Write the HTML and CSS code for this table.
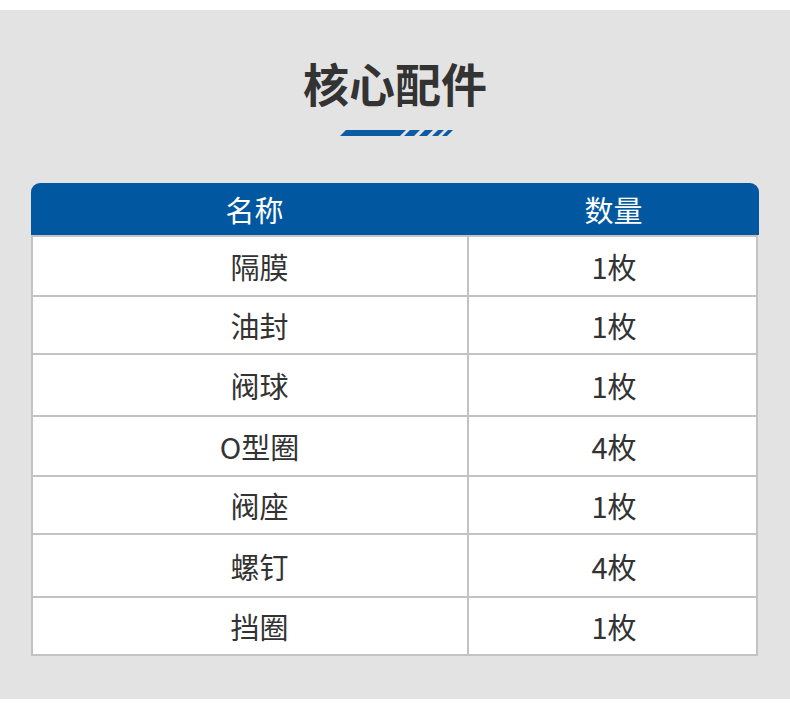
FILE: index.html
```html
<!DOCTYPE html>
<html lang="zh">
<head>
<meta charset="utf-8">
<link rel="stylesheet" href="styles.css">
</head>
<body>
<div class="page">
  <h1 class="title">核心配件</h1>
  <svg class="deco" width="114" height="6" viewBox="0 0 114 6">
    <polygon points="0,6 6,0 66,0 60,6" fill="#0b5aa4"/>
    <polygon points="64,6 70,0 80,0 74,6" fill="#0b5aa4"/>
    <polygon points="79,6 85,0 93,0 87,6" fill="#0b5aa4"/>
    <polygon points="92,6 98,0 104,0 98,6" fill="#0b5aa4"/>
    <polygon points="102,6 108,0 113,0 107,6" fill="#0b5aa4"/>
  </svg>
  <div class="table">
    <div class="head">
      <div class="hcell">名称</div>
      <div class="hcell">数量</div>
    </div>
    <div class="row"><div class="cell">隔膜</div><div class="cell">1枚</div></div>
    <div class="row"><div class="cell">油封</div><div class="cell">1枚</div></div>
    <div class="row"><div class="cell">阀球</div><div class="cell">1枚</div></div>
    <div class="row"><div class="cell">O型圈</div><div class="cell">4枚</div></div>
    <div class="row"><div class="cell">阀座</div><div class="cell">1枚</div></div>
    <div class="row"><div class="cell">螺钉</div><div class="cell">4枚</div></div>
    <div class="row"><div class="cell">挡圈</div><div class="cell">1枚</div></div>
  </div>
</div>
</body>
</html>
```

FILE: styles.css
```css
html, body {
  margin: 0;
  padding: 0;
  background: #ffffff;
}
body {
  font-family: "Noto Sans CJK SC", "Noto Sans", sans-serif;
}
.page {
  margin-top: 10px;
  width: 790px;
  height: 689px;
  background: #e4e3e4;
  padding-top: 40px;
  box-sizing: border-box;
  display: flex;
  flex-direction: column;
  align-items: center;
}
.title {
  margin: 0;
  font-size: 46px;
  line-height: 64px;
  font-weight: 700;
  color: #333333;
  letter-spacing: 0;
  position: relative;
  left: 0;
}
.deco {
  display: block;
  margin-top: 16px;
  margin-left: 4px;
}
.table {
  margin-top: 47px;
  width: 728px;
  margin-left: -1px;
}
.head {
  display: grid;
  grid-template-columns: 436px 1fr;
  height: 52px;
  background: #0258a0;
  border-radius: 9px 9px 0 0;
}
.hcell {
  color: #ffffff;
  font-size: 29px;
  line-height: 52px;
  text-align: center;
}
.hcell:first-child {
  padding-left: 12px;
}
.hcell:last-child {
  padding-left: 2px;
}
.row {
  display: grid;
  grid-template-columns: 436px 1fr;
  height: 60px;
  background: #ffffff;
  border: 2px solid #c3c3c3;
  border-top: none;
  box-sizing: border-box;
  margin-right: 1px;
}
.head + .row {
  border-top: 2px solid #c3c3c3;
  height: 62px;
}
.row:nth-child(3) { height: 58px; }
.row:nth-child(4) { height: 62px; }
.row:nth-child(5) { height: 60px; }
.row:nth-child(6) { height: 58px; }
.row:nth-child(7) { height: 63px; }
.row:nth-child(8) { height: 58px; }
.cell {
  font-size: 29px;
  color: #333333;
  display: flex;
  align-items: center;
  justify-content: center;
}
.cell:first-child {
  border-right: 2px solid #c3c3c3;
  padding-left: 20px;
}
.cell:last-child {
  padding-left: 4px;
}
```
